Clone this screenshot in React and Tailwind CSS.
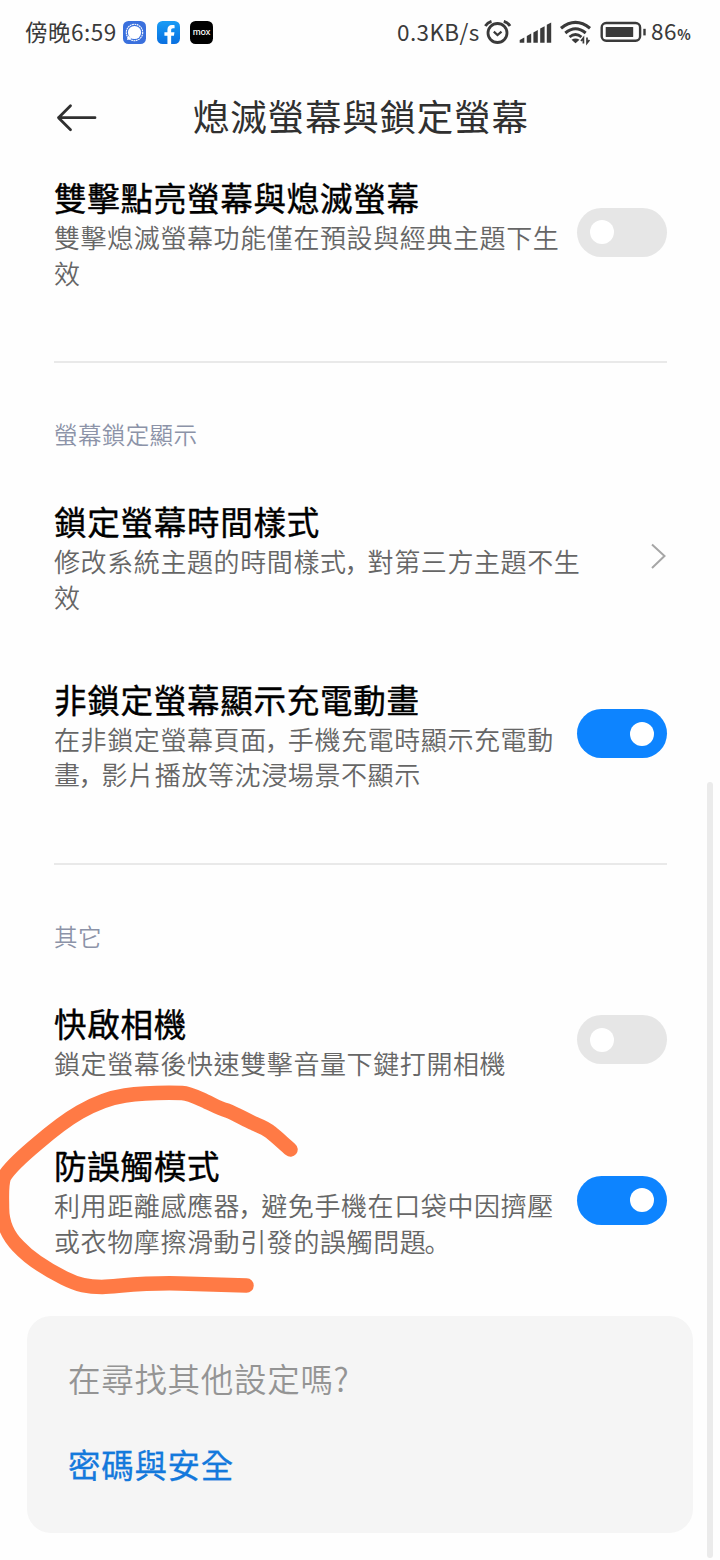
import React, { useState } from "react";
import { FaFacebookF } from "react-icons/fa";

const displayItems = [
  {
    id: "clock-style",
    title: "鎖定螢幕時間樣式",
    lines: ["修改系統主題的時間樣式，對第三方主題不生", "效"],
    type: "link",
  },
  {
    id: "charging",
    title: "非鎖定螢幕顯示充電動畫",
    lines: ["在非鎖定螢幕頁面，手機充電時顯示充電動", "畫，影片播放等沈浸場景不顯示"],
    type: "switch",
  },
];

const otherItems = [
  {
    id: "camera",
    title: "快啟相機",
    lines: ["鎖定螢幕後快速雙擊音量下鍵打開相機"],
    type: "switch",
  },
  {
    id: "pocket",
    title: "防誤觸模式",
    lines: ["利用距離感應器，避免手機在口袋中因擠壓", "或衣物摩擦滑動引發的誤觸問題。"],
    type: "switch",
  },
];

const Toggle = ({ on, onClick }) => (
  <button
    role="switch"
    aria-checked={on}
    onClick={onClick}
    className={`mb-[3px] flex h-[49px] w-[90px] shrink-0 items-center rounded-full px-[13px] ${
      on ? "justify-end bg-[#0d84ff]" : "justify-start bg-[#e6e6e6]"
    }`}
  >
    <span className="h-6 w-6 rounded-full bg-white" />
  </button>
);

// punctuation hugs the left side of its box
const Line = ({ text }) => (
  <span className="block whitespace-nowrap">
    {text.split(/([，。])/).map((part, i) =>
      part === "，" || part === "。" ? (
        <span
          key={i}
          className="-ml-[2px] inline-block w-[23px] font-['Noto_Sans_CJK_SC',sans-serif] [font-feature-settings:'halt']"
        >
          {part}
        </span>
      ) : (
        part
      )
    )}
  </span>
);

const Item = ({ item, on, onToggle }) => (
  <div className="flex items-center justify-between">
    <div className="-mt-px w-[500px] pb-px">
      <h2 className="whitespace-nowrap text-[32.5px] font-normal leading-[46px] tracking-[0.75px] text-black [-webkit-text-stroke:0.4px_#000]">
        {item.title}
      </h2>
      <p className="-mt-px mb-px text-[26px] font-[350] leading-[35.5px] tracking-[0.6px] text-[#666]">
        {item.lines.map((line) => (
          <Line key={line} text={line} />
        ))}
      </p>
    </div>
    {item.type === "switch" ? (
      <Toggle on={on} onClick={onToggle} />
    ) : (
      <svg width="18" height="28" viewBox="0 0 18 28" fill="none" className="mb-[4px]">
        <path d="M3 2.5 L15.5 14 L3 26" stroke="#a6a6a6" strokeWidth="2" />
      </svg>
    )}
  </div>
);

const StatusBar = () => (
  <div className="flex h-[64px] items-center pl-[25px] text-[22.5px] leading-[32px] text-[#3a3a3a]">
    <span className="w-[98px] whitespace-nowrap pb-[2px] tracking-[0.5px]">傍晚6:59</span>
    <div className="flex gap-[10.5px]">
      <svg width="23" height="23" viewBox="0 0 23 23">
        <rect width="23" height="23" rx="5.5" fill="#3a70dd" />
        <circle cx="11.5" cy="11.5" r="8.2" fill="none" stroke="#fff" strokeWidth="1.1" strokeDasharray="1.8 0.6" />
        <circle cx="11.5" cy="11.5" r="6.6" fill="#fff" />
        <path d="M4 19 L5 14.5 L8.5 18 Z" fill="#fff" />
      </svg>
      <div className="flex h-[23px] w-[23px] items-end justify-center overflow-hidden rounded-[5.5px] bg-gradient-to-b from-[#1a9cf5] to-[#0a6fe0] pl-[2px]">
        <FaFacebookF size={19} className="text-white" />
      </div>
      <div className="flex h-[23px] w-[23px] items-center justify-center rounded-[5.5px] bg-black pb-[1px] font-['Inter',sans-serif] text-[9px] font-medium leading-none tracking-[-0.3px] text-white">
        mox
      </div>
    </div>
    <span className="ml-[184px] w-[86px] whitespace-nowrap pb-[2px] tracking-[0.4px]">0.3KB/s</span>
    <svg width="168" height="26" viewBox="483 20 168 26" fill="none" stroke="#3a3a3a" className="mt-[2px]">
      {/* alarm */}
      <circle cx="497.5" cy="33" r="9.5" strokeWidth="2.8" />
      <path d="M493.8 31.6 L497.5 35 L501.5 31.6" strokeWidth="2.2" />
      <path d="M485.3 26 Q487.5 22.5 491.5 21.3 M503.8 21.3 Q508 22.5 510 26" strokeWidth="2.8" />
      {/* signal */}
      <g fill="#3a3a3a" stroke="none">
        <path d="M519.7 40 L524.3 37.6 V42.7 H519.7 Z" />
        <path d="M526.8 36 L531.2 33.6 V42.7 H526.8 Z" />
        <path d="M533.4 32.4 L537.8 30 V42.7 H533.4 Z" />
        <path d="M540.2 28.6 L544.6 26.2 V42.7 H540.2 Z" />
        <path d="M546.8 24.8 L551.2 22.4 V42.7 H546.8 Z" />
      </g>
      {/* wifi */}
      <path d="M561 28.2 Q575.5 16.5 590 28.2" strokeWidth="3.2" />
      <path d="M565.3 33 Q575.5 24.5 585.7 33" strokeWidth="3" />
      <path d="M569.5 37 Q575.5 32 581.5 37" strokeWidth="2.8" />
      <path d="M571.5 39.8 Q575.5 37 579.5 39.8 L575.5 43.3 Z" fill="#3a3a3a" stroke="none" />
      <path d="M583.4 43.5 V38 L581 41 M587 37.5 V43 L589.4 40" strokeWidth="1.7" />
      {/* battery */}
      <rect x="601.7" y="23" width="38.4" height="17.8" rx="4.5" strokeWidth="2.4" />
      <rect x="605.7" y="27" width="27.5" height="10" rx="0.5" fill="#3a3a3a" stroke="none" />
      <path d="M644.5 28.8 V35.4" strokeWidth="2.4" />
    </svg>
    <span className="whitespace-nowrap tracking-[0.6px]">
      86<span className="text-[14px] font-bold">%</span>
    </span>
  </div>
);

const Header = () => (
  <div className="flex h-[111px] items-start pl-[56px] pt-[25px]">
    <svg width="42" height="56" viewBox="0 0 42 56" fill="none" stroke="#303030" strokeWidth="2.8" strokeLinecap="round" strokeLinejoin="round">
      <path d="M39 28.7 H2.5 M14.5 16.7 L2.5 28.7 L14.5 40.7" />
    </svg>
    <h1 className="-mt-px ml-[95px] whitespace-nowrap text-[36.5px] leading-[56px] tracking-[0.8px] text-[#303030]">
      熄滅螢幕與鎖定螢幕
    </h1>
  </div>
);

const SectionLabel = ({ children }) => (
  <h3 className="-mt-px mb-[48px] text-[23.5px] font-[350] leading-[34px] tracking-[0.4px] text-[#8c93a8]">{children}</h3>
);

const App = () => {
  const [enabled, setEnabled] = useState({
    doubleTap: false,
    charging: true,
    camera: false,
    pocket: true,
  });

  const toggle = (id) => setEnabled((prev) => ({ ...prev, [id]: !prev[id] }));

  const renderItem = (item) => (
    <Item key={item.id} item={item} on={enabled[item.id]} onToggle={() => toggle(item.id)} />
  );

  return (
    <div className="relative h-[1560px] w-[720px] overflow-hidden bg-[#fefefe] font-['Noto_Sans_CJK_TC','Noto_Sans_CJK_SC',sans-serif]">
      <StatusBar />
      <Header />
      <main className="pl-[54px] pr-[53px]">
        {renderItem({
          id: "doubleTap",
          title: "雙擊點亮螢幕與熄滅螢幕",
          lines: ["雙擊熄滅螢幕功能僅在預設與經典主題下生", "效"],
          type: "switch",
        })}
        <section className="mt-[69px] border-t-2 border-[#e9e9e9] pt-[55px]">
          <SectionLabel>螢幕鎖定顯示</SectionLabel>
          <div className="flex flex-col gap-[60.5px]">{displayItems.map(renderItem)}</div>
        </section>
        <section className="mt-[69px] border-t-2 border-[#e9e9e9] pt-[55px]">
          <SectionLabel>其它</SectionLabel>
          <div className="flex flex-col gap-[61px]">{otherItems.map(renderItem)}</div>
        </section>
      </main>
      <div className="mx-[27px] mt-[56px] h-[217px] rounded-[24px] bg-[#f5f5f5] px-[41px] pt-[39px] text-[32.5px] leading-[46px] tracking-[0.7px]">
        <p className="font-[350] text-[#949494]">在尋找其他設定嗎?</p>
        <a href="#" className="mt-[39.5px] block text-[#1479dc] [-webkit-text-stroke:0.3px_#1479dc]">
          密碼與安全
        </a>
      </div>

      {/* scrollbar thumb */}
      <div className="absolute left-[707px] top-[782px] h-[776px] w-[6px] rounded-full bg-[#ebebeb]" />

      {/* marker drawn around the last option */}
      <svg className="pointer-events-none absolute left-0 top-[1070px]" width="330" height="240" viewBox="0 1070 330 240" fill="none">
        <path
          d="M290.5 1149.5 C285 1145 278 1138 271 1132.5 C265 1127.5 260 1126 254 1123.5 C244 1119 236 1114 227 1110.5 C218 1108 212 1104 206 1101.5 C196 1097 190 1093.5 182 1093 C160 1092.5 142 1093 125 1095.5 C108 1098 94 1104 80 1112 C66 1120 52 1131 38 1143 C26 1153 10 1167 4 1177 C1 1185 2 1196 2 1208 C2 1222 8 1236 18 1246 C30 1259 48 1270 64 1278 C78 1285 88 1287 102 1287 C130 1285 150 1282.5 180 1283.5 L246.5 1285.5"
          stroke="#ff7a45"
          strokeWidth="14.5"
          strokeLinecap="round"
          strokeLinejoin="round"
        />
      </svg>
    </div>
  );
};

export default App;
